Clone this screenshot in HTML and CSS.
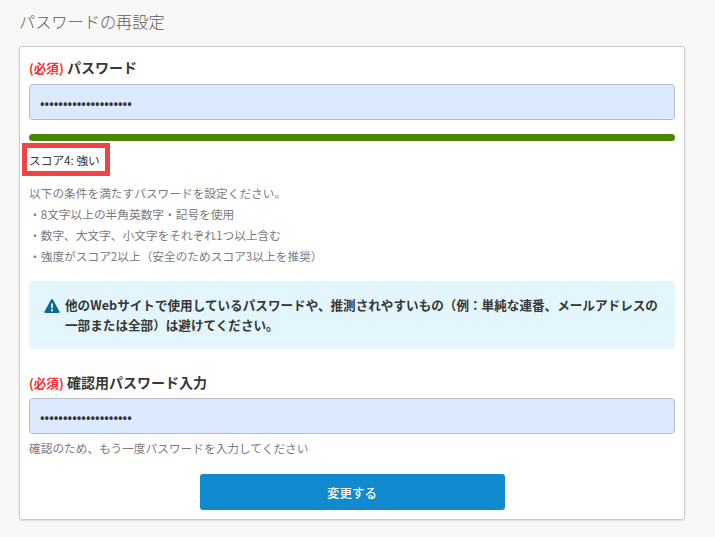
FILE: index.html
```html
<!DOCTYPE html>
<html lang="ja">
<head>
    <meta charset="UTF-8">
    <title>パスワードの再設定</title>
    <link rel="stylesheet" href="styles.css">
</head>
<body>
    <h1 class="page-title">パスワードの再設定</h1>
    <form class="card">
        <div class="field">
            <label class="label"><span class="required">(必須)</span> パスワード</label>
            <input class="input" type="password" value="aaaaaaaaaaaaaaaaaaaa">
        </div>
        <div class="meter"></div>
        <p class="score"><span class="score-mark">スコア4: 強い</span></p>
        <ul class="rules">
            <li>以下の条件を満たすパスワードを設定ください。</li>
            <li>・8文字以上の半角英数字・記号を使用</li>
            <li>・数字、大文字、小文字をそれぞれ1つ以上含む</li>
            <li>・強度がスコア2以上（安全のためスコア3以上を推奨）</li>
        </ul>
        <div class="alert">
            <svg class="alert-icon" viewBox="0 0 16 16" width="16" height="16">
                <path fill="#0b6a94" fill-rule="evenodd" d="M8 1c.4 0 .7.2.9.5l6.6 12c.4.7-.1 1.5-.9 1.5H1.400c-.8 0-1.300-.8-.9-1.500l6.600-12C7.300 1.200 7.600 1 8 1zM7 5.500l.3 5h1.400l.3-5H7zM8 11.300a1.100 1.100 0 1 0 0 2.200 1.100 1.100 0 0 0 0-2.200z"/>
            </svg>
            <p class="alert-text">他のWebサイトで使用しているパスワードや、推測されやすいもの（例：単純な連番、メールアドレスの一部または全部）は避けてください。</p>
        </div>
        <div class="field confirm">
            <label class="label"><span class="required">(必須)</span> 確認用パスワード入力</label>
            <input class="input" type="password" value="aaaaaaaaaaaaaaaaaaaa">
            <p class="hint">確認のため、もう一度パスワードを入力してください</p>
        </div>
        <div class="actions">
            <button class="submit" type="button">変更する</button>
        </div>
    </form>
</body>
</html>
```

FILE: styles.css
```css
* {
    box-sizing: border-box;
}
body {
    margin: 0;
    padding: 0 30px 18px 19px;
    background-color: #f8f8f8;
    color: #363636;
    font-family: "Noto Sans CJK JP", "Noto Sans", sans-serif;
    font-size: 14px;
}
.page-title {
    margin: 0;
    padding: 10px 0 13px;
    color: #5a5a5a;
    font-size: 16.2px;
    font-weight: 300;
    line-height: 23px;
}
.card {
    padding: 10px 9px 9px;
    background-color: #fff;
    border: 1px solid #ccc;
    border-radius: 3px;
    box-shadow: 0 1px 2px rgba(0,0,0,0.12);
}
.field {
    display: flex;
    flex-direction: column;
}
.label {
    margin-bottom: 6px;
    color: #363636;
    font-size: 14px;
    font-weight: 700;
    line-height: 21px;
}
.required {
    color: #ff2b2b;
    font-size: 12.6px;
    font-weight: 700;
}
.input {
    width: 100%;
    height: 36px;
    padding: 0 10px;
    background-color: #dbeafe;
    border: 1px solid #b8bcc2;
    border-radius: 4px;
    color: #363636;
    font-family: inherit;
    font-size: 13.5px;
}
.meter {
    height: 7px;
    margin-top: 14px;
    background-color: #4c8600;
    border-radius: 4px;
}
.score {
    margin: 0;
    padding-top: 10px;
    font-size: 11.7px;
    line-height: 18px;
}
.score-mark {
    position: relative;
    display: inline-block;
}
.score-mark::after {
    content: "";
    position: absolute;
    left: -7px;
    right: -10px;
    top: -8px;
    bottom: -7px;
    border: 5px solid #ee4444;
}
.rules {
    margin: 13px 0 0;
    padding: 0;
    color: #7a7a7a;
    font-size: 11.7px;
    line-height: 21px;
    list-style: none;
}
.alert {
    display: flex;
    gap: 5px;
    margin-top: 15px;
    padding: 14px 15px;
    background-color: #e3f6fe;
    border-radius: 4px;
}
.alert-icon {
    flex-shrink: 0;
    margin-top: 3px;
}
.alert-text {
    margin: 0;
    color: #363636;
    font-size: 12.6px;
    font-weight: 700;
    line-height: 20px;
}
.confirm {
    margin-top: 23px;
}
.confirm .label {
    margin-bottom: 5px;
}
.hint {
    margin: 4px 0 0;
    color: #7a7a7a;
    font-size: 11.7px;
    line-height: 20px;
}
.actions {
    display: flex;
    justify-content: center;
    margin-top: 16px;
}
.submit {
    width: 305px;
    height: 36px;
    background-color: #118ad0;
    border: none;
    border-radius: 3px;
    color: #fff;
    font-family: inherit;
    font-size: 12.5px;
    font-weight: 500;
}
```
